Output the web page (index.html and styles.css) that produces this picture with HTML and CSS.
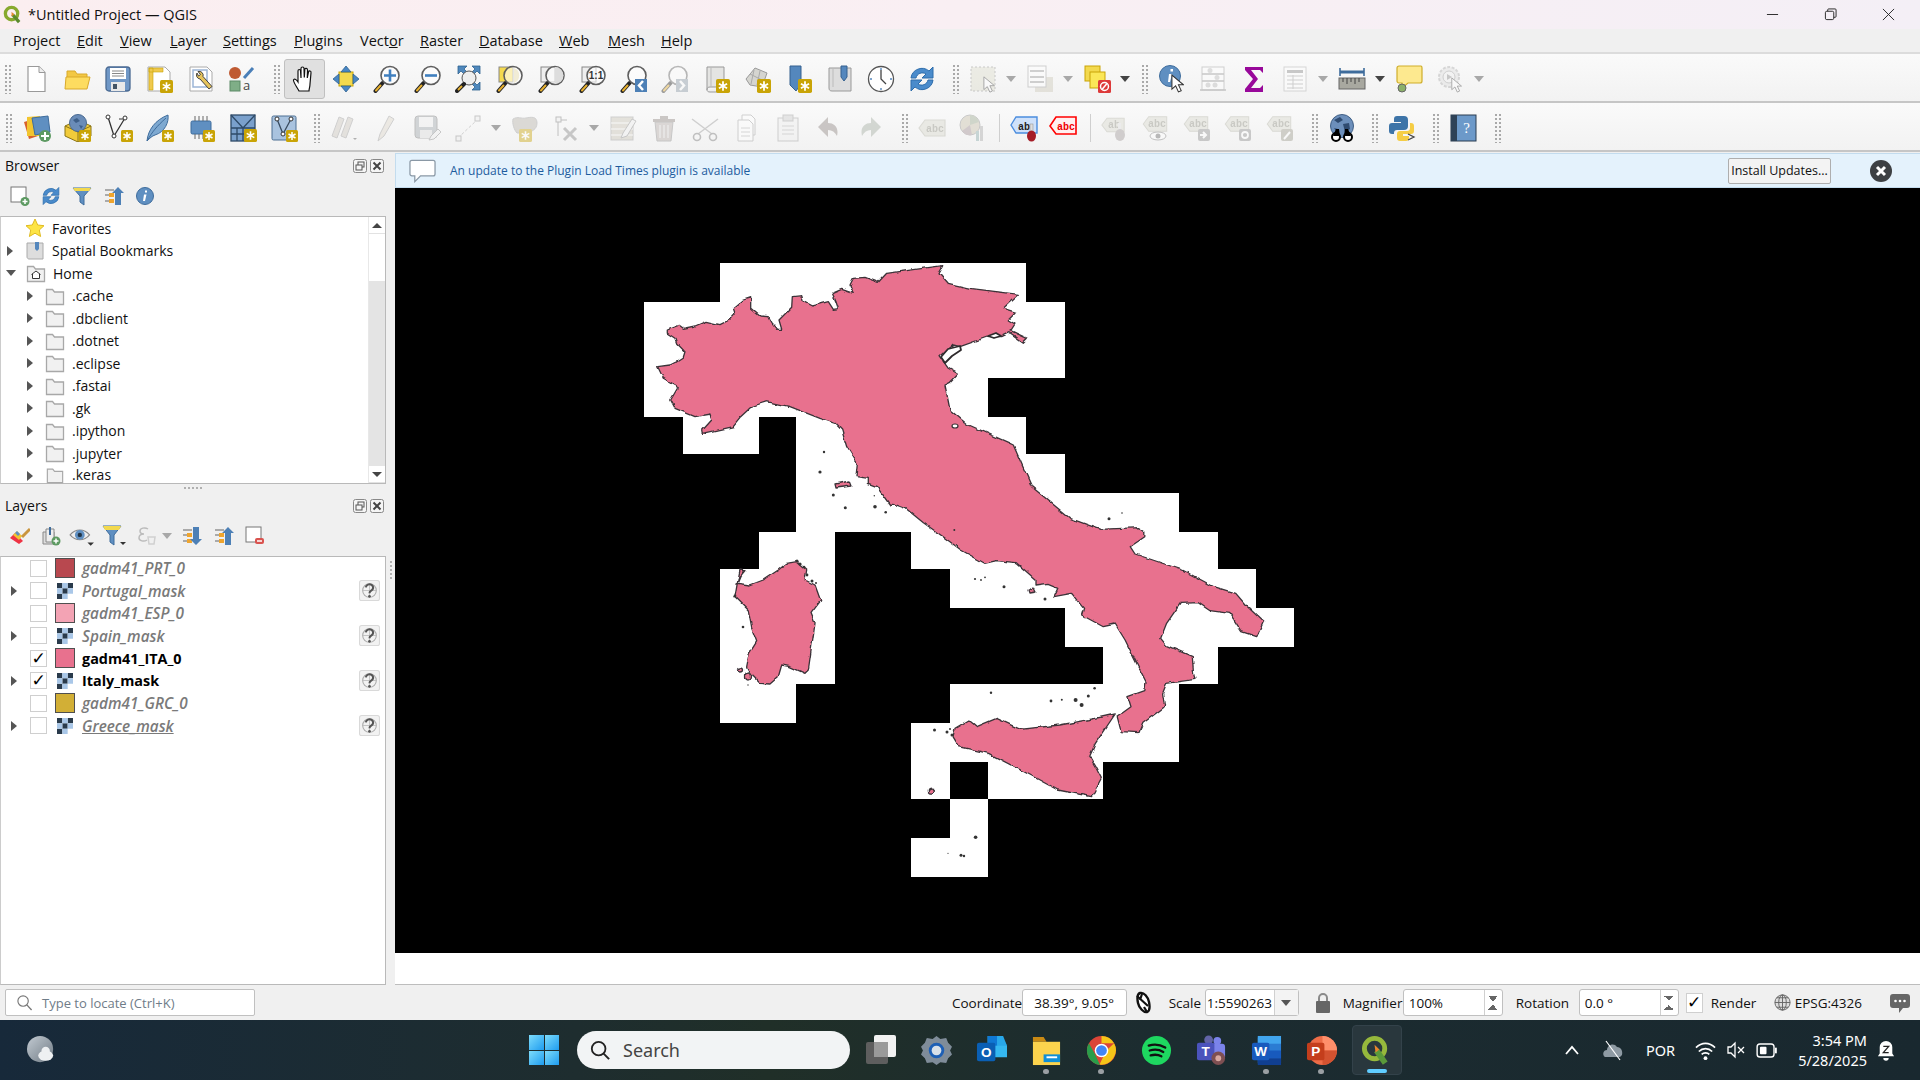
FILE: index.html
```html
<!DOCTYPE html>
<html lang="en">
<head>
  <meta charset="UTF-8">
  <title>*Untitled Project — QGIS</title>
  <link rel="stylesheet" href="styles.css">
</head>
<body>

<!-- shared icon pieces -->
<svg class="sprite" xmlns="http://www.w3.org/2000/svg">
  <symbol id="badge" viewBox="0 0 12 12">
    <rect width="12" height="12" rx="1.5" fill="#c9a406"/>
    <path d="M6 2v8M2.5 4l7 4M9.5 4l-7 4" stroke="#fff" stroke-width="1.5"/>
  </symbol>
  <symbol id="mag" viewBox="0 0 28 28">
    <path d="M2.5 26l7-8" stroke="#222" stroke-width="4" stroke-linecap="round"/>
    <path d="M3 25.5l4.5-5" stroke="#e6b030" stroke-width="2" stroke-linecap="round"/>
    <circle cx="17" cy="10.5" r="9" fill="#fff" fill-opacity=".6" stroke="#5e5e5e" stroke-width="1.6"/>
  </symbol>
  <symbol id="cursor" viewBox="0 0 14 20">
    <path d="M1 1v15l4-3.5 3 6.5 3-1.3-3-6.3h5.4z" fill="#fff" stroke="#333" stroke-width="1.1"/>
  </symbol>
  <symbol id="refresh" viewBox="0 0 28 28">
    <path d="M3 13a11 11 0 0 1 18-7l4-4v11H14l4-4A6.500 6.500 0 0 0 8 13z" fill="#4a8bcb" stroke="#2c6cab"/>
    <path d="M25 15a11 11 0 0 1-18 7l-4 4V15h11l-4 4a6.500 6.500 0 0 0 10-4z" fill="#4a8bcb" stroke="#2c6cab"/>
  </symbol>
  <symbol id="folder" viewBox="0 0 20 20">
    <path d="M1.500 3.500h6l2 2.500h9v12.500h-17z" fill="#f1f1f1" stroke="#a8a8a8" stroke-width="1.300"/>
  </symbol>
  <symbol id="raster" viewBox="0 0 18 18">
    <rect width="18" height="18" fill="#fff"/>
    <path d="M0 0h6v6H0zM12 0h6v6h-6zM6 6h6v6H6zM0 12h6v6H0z" fill="#293a4b"/>
    <path d="M6 0h6v6H6zM0 6h6v6H0zM12 6h6v6h-6zM6 12h6v6H6z" fill="#a9c7e8"/>
  </symbol>
  <symbol id="help-badge" viewBox="0 0 20 20">
    <rect x=".5" y=".5" width="19" height="19" rx="2" fill="#f2f2f2" stroke="#d9d9d9"/>
    <circle cx="10" cy="10" r="6.500" fill="none" stroke="#aaa"/>
    <path d="M3.500 10h13M10 3.500v13" stroke="#bbb" stroke-width=".8"/>
    <path d="M6.500 7a3.500 3.200 0 1 1 5 3.200c-1 .6-1.500 1-1.500 2.300" fill="none" stroke="#555" stroke-width="2"/>
    <circle cx="10" cy="15.500" r="1.300" fill="#555"/>
  </symbol>
  <symbol id="label-tag" viewBox="0 0 28 20">
    <path d="M1 10l6-8h20v16H7z" fill="#d8d8cc" stroke="#b5b5a8" stroke-width="1.200"/>
  </symbol>
  <symbol id="float" viewBox="0 0 14 14">
    <rect x=".5" y=".5" width="13" height="13" rx="2" fill="#f5f5f5" stroke="#888"/>
    <rect x="5" y="3" width="6" height="5" fill="none" stroke="#555"/>
    <rect x="3" y="6" width="6" height="5" fill="#f5f5f5" stroke="#555"/>
  </symbol>
  <symbol id="close" viewBox="0 0 14 14">
    <rect x=".5" y=".5" width="13" height="13" rx="2" fill="#f5f5f5" stroke="#888"/>
    <path d="M3.500 3.500l7 7M10.500 3.500l-7 7" stroke="#444" stroke-width="2"/>
  </symbol>
</svg>

<div class="titlebar">
  <svg class="app-icon" viewBox="0 0 20 20"><circle cx="9" cy="9" r="6.500" fill="none" stroke="#88a92e" stroke-width="3.500"/><path d="M10 10l7 8" stroke="#5b8a2c" stroke-width="3.500"/><path d="M9 7l3 3-3 2z" fill="#e58a2b"/></svg>
  <span class="title-text">*Untitled Project — QGIS</span>
  <div class="win-btns">
    <svg viewBox="0 0 14 14"><path d="M1 7h12" stroke="#222"/></svg>
    <svg viewBox="0 0 14 14"><rect x="1.500" y="3.500" width="9" height="9" rx="1.500" fill="none" stroke="#222"/><path d="M4 3.500V2a1 1 0 0 1 1-1h7a1 1 0 0 1 1 1v7a1 1 0 0 1-1 1h-1.500" fill="none" stroke="#222"/></svg>
    <svg viewBox="0 0 14 14"><path d="M1 1l12 12M13 1L1 13" stroke="#222"/></svg>
  </div>
</div>

<div class="menubar">
  <span class="menu-project">Pro<u>j</u>ect</span>
  <span class="menu-edit"><u>E</u>dit</span>
  <span class="menu-view"><u>V</u>iew</span>
  <span class="menu-layer"><u>L</u>ayer</span>
  <span class="menu-settings"><u>S</u>ettings</span>
  <span class="menu-plugins"><u>P</u>lugins</span>
  <span class="menu-vector">Vect<u>o</u>r</span>
  <span class="menu-raster"><u>R</u>aster</span>
  <span class="menu-database"><u>D</u>atabase</span>
  <span class="menu-web"><u>W</u>eb</span>
  <span class="menu-mesh"><u>M</u>esh</span>
  <span class="menu-help"><u>H</u>elp</span>
</div>

<div class="toolbar">
  <i class="grip first"></i>
  <b class="tool"><svg viewBox="0 0 28 28"><path d="M6 1.500h11l6 6v19H6z" fill="#fff" stroke="#999" stroke-width="1.200"/><path d="M17 1.500v6h6" fill="#eee" stroke="#999"/></svg></b>
  <b class="tool"><svg viewBox="0 0 28 28"><path d="M4 6h8l2 3h10v5H4z" fill="#f3c844" stroke="#d9a92b"/><path d="M3 12h24l-3 12H2z" fill="#fddc60" stroke="#d9a92b"/></svg></b>
  <b class="tool"><svg viewBox="0 0 28 28"><rect x="2" y="2" width="24" height="24" rx="3" fill="#6f97c6" stroke="#4a6a92" stroke-width="1.300"/><rect x="6" y="3" width="16" height="11" fill="#fff"/><path d="M8 6h12M8 8.500h12M8 11h12" stroke="#888"/><rect x="7" y="17" width="14" height="9" fill="#e9e9e9"/><rect x="9" y="19" width="4" height="5" fill="#456"/></svg></b>
  <b class="tool"><svg viewBox="0 0 28 28"><path d="M2 2h17l5 5v19H2z" fill="#fff" stroke="#aaa"/><path d="M3 3h4v22H3zM3 3h14v4H3z" fill="#f0c94e" stroke="#c9a406" stroke-width=".6"/><use href="#badge" x="14" y="15" width="13" height="13"/></svg></b>
  <b class="tool"><svg viewBox="0 0 28 28"><path d="M3 2h17l5 5v19H3z" fill="#fff" stroke="#aaa"/><rect x="6" y="5" width="14" height="17" fill="none" stroke="#9cb5d6" stroke-width="1.500"/><path d="M10 8a4 4 0 0 0 3 6l9 10 3-2.500-9-10a4 4 0 0 0-5-5l2.500 3-2 1.500z" fill="#e6c45c" stroke="#444"/></svg></b>
  <b class="tool"><svg viewBox="0 0 28 28"><circle cx="7" cy="8" r="6" fill="#bf5a32"/><path d="M16 13L25 3" stroke="#4a7fb8" stroke-width="3"/><rect x="2" y="16" width="10" height="10" fill="#7fae87" stroke="#5d8a67"/><text x="15" y="25" class="svg-a">a</text></svg></b>
  <i class="grip lead"></i>
  <b class="tool active"><svg viewBox="0 0 28 28"><path d="M9 26C7 22 3 17 3.500 15c.5-1.500 2.500-1 4.500 2L8 6c0-2 2.500-2 2.500 0l.5 7V3.500c0-2 3-2 3 0l.3 9 .5-8c.2-1.800 2.800-1.500 2.700.5l-.2 8 1.200-6c.5-1.700 2.800-1.200 2.500.8L20 19c0 3-1 5-1 7z" fill="#fff" stroke="#111" stroke-width="1.200"/></svg></b>
  <b class="tool"><svg viewBox="0 0 28 28"><rect x="7" y="7" width="14" height="14" fill="#f4d94e" stroke="#c9a406"/><path d="M14 1l5 6H9zM14 27l-5-6h10zM1 14l6-5v10zM27 14l-6 5V9z" fill="#4a87c4" stroke="#2e628f" stroke-width=".8"/></svg></b>
  <b class="tool"><svg viewBox="0 0 28 28"><use href="#mag" width="28" height="28"/><path d="M11 10.500h12M17 4.500v12" stroke="#3f7fbf" stroke-width="2.600"/></svg></b>
  <b class="tool"><svg viewBox="0 0 28 28"><use href="#mag" width="28" height="28"/><path d="M11 10.500h12" stroke="#3f7fbf" stroke-width="2.600"/></svg></b>
  <b class="tool"><svg viewBox="0 0 28 28"><path d="M3 1h9L9 4l3 3-3 2-3-3-3 3zM25 1v8l-3-3-3 3-2-2 3-3-3-3zM25 25h-8l3-3-3-3 2-2 3 3 3-3z" fill="#4f88bd" stroke="#2e628f" stroke-width=".8"/><circle cx="14" cy="13" r="7" fill="#eee" stroke="#555"/><path d="M2 26l7-7" stroke="#222" stroke-width="4" stroke-linecap="round"/><path d="M3 25l4-4" stroke="#e6b030" stroke-width="2"/></svg></b>
  <b class="tool"><svg viewBox="0 0 28 28"><rect x="3" y="2" width="14" height="15" fill="#f4d94e" stroke="#888"/><use href="#mag" width="28" height="28"/><path d="M18 3a8 8 0 0 1 0 15z" fill="#f1ecd6"/></svg></b>
  <b class="tool"><svg viewBox="0 0 28 28"><rect x="3" y="2" width="14" height="15" fill="#eee" stroke="#888"/><use href="#mag" width="28" height="28"/><path d="M17 2a8.500 8.500 0 0 1 0 17z" fill="#ddd"/></svg></b>
  <b class="tool"><svg viewBox="0 0 28 28"><rect x="3" y="2" width="14" height="15" fill="#eee" stroke="#888"/><use href="#mag" width="28" height="28"/><text x="17" y="14" class="svg-11">1:1</text></svg></b>
  <b class="tool"><svg viewBox="0 0 28 28"><use href="#mag" width="28" height="28"/><rect x="15" y="14" width="12" height="13" fill="#4d80b6"/><path d="M23 16l-4 4.500 4 4.500" fill="none" stroke="#fff" stroke-width="2.500"/></svg></b>
  <b class="tool off"><svg viewBox="0 0 28 28"><use href="#mag" width="28" height="28"/><rect x="15" y="14" width="12" height="13" fill="#8a98a5"/><path d="M19 16l4 4.500-4 4.500" fill="none" stroke="#fff" stroke-width="2.500"/></svg></b>
  <b class="tool"><svg viewBox="0 0 28 28"><path d="M5 2h17v20H8c-2 0-3 1-3 3z" fill="#e4e4e2" stroke="#999"/><path d="M5 25c0 1 1 2 3 2h14v-5" fill="#eee" stroke="#999"/><path d="M9 2v20" stroke="#bbb"/><use href="#badge" x="14" y="14" width="14" height="14"/></svg></b>
  <b class="tool"><svg viewBox="0 0 28 28"><path d="M3 14l9-11 12 5-5 14-12-2z" fill="#d5d5d0" stroke="#999"/><path d="M7 9l12 6M11 5l-3 14M17 6l-3 14" stroke="#aaa"/><use href="#badge" x="14" y="14" width="14" height="14"/></svg></b>
  <b class="tool"><svg viewBox="0 0 28 28"><path d="M5 1h11v18l-5 7-6-6z" fill="#5487bd" stroke="#35618f"/><use href="#badge" x="13" y="14" width="14" height="14"/></svg></b>
  <b class="tool"><svg viewBox="0 0 28 28"><path d="M3 3h22v23H6c-2 0-3-1-3-3z" fill="#ddd" stroke="#999"/><path d="M7 3v19" stroke="#bbb"/><path d="M15 1h6v11l-3 4-3-4z" fill="#5487bd" stroke="#35618f"/></svg></b>
  <b class="tool"><svg viewBox="0 0 28 28"><circle cx="14" cy="14" r="12.500" fill="#fff" stroke="#555" stroke-width="1.300"/><path d="M14 5v9l5 5" fill="none" stroke="#444" stroke-width="1.300"/><path d="M14 3v2M14 23v2M3 14h2M23 14h2" stroke="#5487bd" stroke-width="1.400"/></svg></b>
  <b class="tool"><svg viewBox="0 0 28 28"><use href="#refresh" width="28" height="28"/></svg></b>
  <i class="grip"></i>
  <b class="tool drop off"><svg viewBox="0 0 28 28"><rect x="2" y="2" width="24" height="24" fill="#dcdccb" stroke="#888" stroke-dasharray="2 2"/><use href="#cursor" x="14" y="11" width="12" height="17"/></svg><i class="caret"></i></b>
  <b class="tool drop off"><svg viewBox="0 0 28 28"><rect x="9" y="12" width="18" height="15" fill="#ccc8b8"/><rect x="2" y="1" width="18" height="21" fill="#fff" stroke="#999"/><path d="M4 6h14M4 12h14M4 17h14" stroke="#999" stroke-width="2"/></svg><i class="caret"></i></b>
  <b class="tool drop dark"><svg viewBox="0 0 28 28"><rect x="2" y="1" width="15" height="15" fill="#f3d94e" stroke="#c9a406"/><rect x="7" y="7" width="15" height="16" fill="#fbe758" stroke="#c9a406"/><rect x="15" y="15" width="13" height="13" rx="1.500" fill="#dd3a3a"/><circle cx="21.500" cy="21.500" r="4" fill="none" stroke="#fff" stroke-width="1.500"/><path d="M19 24.500l5-6" stroke="#fff" stroke-width="1.500"/></svg><i class="caret"></i></b>
  <i class="grip tight"></i>
  <b class="tool"><svg viewBox="0 0 28 28"><circle cx="12" cy="11" r="10.500" fill="#5f8fc1" stroke="#3e6c9c"/><path d="M11 9h3l-2 8h-2zM12.500 4h2.500v2.500h-2.500z" fill="#fff"/><use href="#cursor" x="13" y="9" width="13" height="19"/></svg></b>
  <b class="tool off"><svg viewBox="0 0 28 28"><rect x="3" y="2" width="22" height="23" fill="#fff" stroke="#999"/><path d="M3 9h22M3 16h22M1 25h26" stroke="#888" stroke-width="1.500"/><circle cx="11" cy="5.500" r="2.500" fill="#bbb"/><circle cx="18" cy="12.500" r="2.500" fill="#bbb"/><circle cx="9" cy="20" r="2.500" fill="#bbb"/><circle cx="16" cy="20" r="2.500" fill="#bbb"/></svg></b>
  <b class="tool"><svg viewBox="0 0 28 28"><path d="M5 2h18v6l-3-3H11l7 9-7 9h9l3-3v7H5v-3l8-10-8-9z" fill="#98089a"/></svg></b>
  <b class="tool drop off"><svg viewBox="0 0 28 28"><rect x="3" y="2" width="22" height="24" fill="#fff" stroke="#aaa"/><path d="M6 5h16v3H6z" fill="#888"/><path d="M6 11h16M6 15h16M6 19h16M6 23h16M12 10v14" stroke="#999"/></svg><i class="caret"></i></b>
  <b class="tool drop dark"><svg viewBox="0 0 28 28"><rect x="1" y="13" width="26" height="11" fill="#a8a8a0" stroke="#666"/><path d="M5 13v4M9 13v6M13 13v4M17 13v6M21 13v4" stroke="#444"/><path d="M2 7h24" stroke="#3e6c9c" stroke-width="3"/><path d="M2 3v8M26 3v8" stroke="#3e6c9c" stroke-width="1.600"/></svg><i class="caret"></i></b>
  <b class="tool"><svg viewBox="0 0 28 28"><path d="M4 1h22a2 2 0 0 1 1 2v13a2 2 0 0 1-2 2H13l-6 5v-5H4a2 2 0 0 1-2-2V3a2 2 0 0 1 2-2z" fill="#fde98f" stroke="#cfae2b" stroke-width="1.200"/><circle cx="7" cy="23" r="4" fill="#8bb06a" stroke="#666"/></svg></b>
  <b class="tool drop off"><svg viewBox="0 0 28 28"><circle cx="12" cy="12" r="10" fill="#ddd" stroke="#aaa" stroke-width="2" stroke-dasharray="3 1.500"/><circle cx="12" cy="12" r="6" fill="#eee" stroke="#999"/><path d="M10 9l5 3-5 3z" fill="#888"/><use href="#cursor" x="14" y="12" width="11" height="16"/></svg><i class="caret"></i></b>
</div>

<div class="toolbar row-two">
  <i class="grip first"></i>
  <b class="tool"><svg viewBox="0 0 28 28"><path d="M1 8l10-3 4 17-9 3z" fill="#d8622b"/><path d="M4 3l13-1v20H4z" fill="#f2c530"/><path d="M9 4l16-2 2 16-15 3z" fill="#5f8fc1" stroke="#3e6c9c"/><circle cx="22" cy="22" r="6" fill="#5d9a62"/><path d="M22 18v8M18 22h8" stroke="#fff" stroke-width="2"/></svg></b>
  <b class="tool"><svg viewBox="0 0 28 28"><path d="M1 12l13-6 13 6v10l-13 6-13-6z" fill="#f2cb3a" stroke="#8a7415"/><path d="M1 12l13 6 13-6M14 18v10" fill="none" stroke="#8a7415"/><circle cx="14" cy="9" r="8.500" fill="#6a8cb8" stroke="#4a6a92"/><path d="M9 6l4-2 3 3-4 2zM15 11l4 1-2 3z" fill="#3e5f88"/><use href="#badge" x="15" y="16" width="12" height="12"/></svg></b>
  <b class="tool"><svg viewBox="0 0 28 28"><path d="M3 3l6 19 11-18" fill="none" stroke="#333" stroke-width="1.300"/><path d="M14 5h6" stroke="#333"/><circle cx="3" cy="3" r="2" fill="#fff" stroke="#333"/><circle cx="9" cy="22" r="2" fill="#fff" stroke="#333"/><circle cx="20" cy="4" r="2" fill="#fff" stroke="#333"/><use href="#badge" x="16" y="16" width="12" height="12"/></svg></b>
  <b class="tool"><svg viewBox="0 0 28 28"><path d="M1 27C2 16 9 6 22 1c1 7-3 17-13 20-3 1-5 3-8 6z" fill="#7ea9d1" stroke="#3e6c9c"/><path d="M1 27C6 18 11 12 20 4" fill="none" stroke="#3e6c9c"/><use href="#badge" x="16" y="16" width="12" height="12"/></svg></b>
  <b class="tool"><svg viewBox="0 0 28 28"><rect x="4" y="7" width="20" height="13" rx="1.500" fill="#5f8fc1" stroke="#3e6c9c"/><path d="M8 2v5M12 2v5M16 2v5M20 2v5M8 20v5M12 20v5M16 20v5" stroke="#666"/><use href="#badge" x="16" y="16" width="12" height="12"/></svg></b>
  <b class="tool"><svg viewBox="0 0 28 28"><rect x="2" y="1" width="24" height="26" fill="#7aa0cc" stroke="#2e4a68" stroke-width="1.300"/><path d="M2 1l12 13L26 1M2 14h24M14 14v13M8 14v13M2 20h24" fill="none" stroke="#2e4a68" stroke-width="1.300"/><use href="#badge" x="15" y="15" width="13" height="13"/></svg></b>
  <b class="tool"><svg viewBox="0 0 28 28"><rect x="2" y="2" width="24" height="24" rx="1.500" fill="#a9c3df" stroke="#4d6f92"/><path d="M7 5l6 15 8-15" fill="none" stroke="#384b60" stroke-width="1.300"/><circle cx="7" cy="5" r="2" fill="#fff" stroke="#333"/><circle cx="13" cy="20" r="2" fill="#fff" stroke="#333"/><circle cx="21" cy="5" r="2" fill="#fff" stroke="#333"/><use href="#badge" x="16" y="16" width="12" height="12"/></svg></b>
  <i class="grip"></i>
  <b class="tool off"><svg viewBox="0 0 28 28"><path d="M2 22L9 3l5 2-7 19zM11 22l7-19 5 2-7 19z" fill="#ccc6bd" stroke="#999"/><path d="M23 24h4l-2 2z" fill="#555"/></svg></b>
  <b class="tool off"><svg viewBox="0 0 28 28"><path d="M7 27l2-7L18 2l5 3-10 17z" fill="#ddd6c9" stroke="#999"/></svg></b>
  <b class="tool off"><svg viewBox="0 0 28 28"><rect x="2" y="2" width="22" height="22" rx="3" fill="#9fa6ab" stroke="#777"/><rect x="6" y="3" width="14" height="10" fill="#eee"/><rect x="7" y="16" width="12" height="8" fill="#ddd"/><path d="M16 26l2-4 7-7 3 3-7 7z" fill="#eee" stroke="#888"/></svg></b>
  <b class="tool drop off"><svg viewBox="0 0 28 28"><path d="M4 24L24 5" stroke="#999" stroke-dasharray="3 2"/><rect x="2" y="22" width="5" height="5" fill="#eee" stroke="#888"/><rect x="21" y="2" width="5" height="5" fill="#eee" stroke="#888"/></svg><i class="caret"></i></b>
  <b class="tool off"><svg viewBox="0 0 28 28"><path d="M2 5c5-3 8 0 13-1s11-2 11 5-6 8-8 10H6C3 16 1 9 2 5z" fill="#b6b2a8" stroke="#999"/><use href="#badge" x="8" y="15" width="13" height="13"/></svg></b>
  <b class="tool drop off"><svg viewBox="0 0 28 28"><path d="M8 6l7 0M6 8v14" stroke="#777"/><rect x="4" y="3" width="5" height="5" fill="#eee" stroke="#777"/><path d="M12 14l12 12M24 14L12 26" stroke="#888" stroke-width="3"/></svg><i class="caret"></i></b>
  <b class="tool off"><svg viewBox="0 0 28 28"><rect x="2" y="3" width="22" height="23" fill="#c9c4b5" stroke="#999"/><path d="M2 9h22M2 15h22M2 21h22" stroke="#fff"/><path d="M12 24l2-5 9-14 4 2-9 15z" fill="#eee" stroke="#888"/></svg></b>
  <b class="tool off"><svg viewBox="0 0 28 28"><path d="M5 8h18l-2 19H7z" fill="#b5aca8" stroke="#888"/><path d="M3 5h22v3H3zM10 2h8v3h-8z" fill="#8d8480"/><path d="M10 11v13M14 11v13M18 11v13" stroke="#eee"/></svg></b>
  <b class="tool off"><svg viewBox="0 0 28 28"><path d="M1 5l20 15M27 5L7 20" stroke="#999" stroke-width="1.500"/><circle cx="6" cy="23" r="3.500" fill="none" stroke="#777" stroke-width="1.600"/><circle cx="22" cy="23" r="3.500" fill="none" stroke="#777" stroke-width="1.600"/></svg></b>
  <b class="tool off"><svg viewBox="0 0 28 28"><path d="M9 1h9l4 4v16H9z" fill="#fff" stroke="#999"/><path d="M5 6h11l4 4v17H5z" fill="#fff" stroke="#999"/><path d="M8 14h9M8 18h9M8 22h9" stroke="#aaa"/></svg></b>
  <b class="tool off"><svg viewBox="0 0 28 28"><rect x="4" y="4" width="20" height="23" fill="#eee" stroke="#999"/><rect x="9" y="1" width="10" height="6" fill="#ccc" stroke="#999"/><path d="M8 12h12M8 16h12M8 20h12" stroke="#aaa"/></svg></b>
  <b class="tool off"><svg viewBox="0 0 28 28"><path d="M3 13L13 3v6c7 0 11 5 9 13-2-4-5-6-9-6v7z" fill="#8d8480"/></svg></b>
  <b class="tool off"><svg viewBox="0 0 28 28"><path d="M25 13L15 3v6c-7 0-11 5-9 13 2-4 5-6 9-6v7z" fill="#a3aca0"/></svg></b>
  <i class="grip wide"></i>
  <b class="tool off"><svg viewBox="0 0 28 20"><use href="#label-tag" width="28" height="20"/><text x="17" y="14" class="svg-ab gray">abc</text></svg></b>
  <b class="tool off"><svg viewBox="0 0 28 28"><circle cx="11" cy="11" r="10" fill="#c7bfa8" stroke="#888"/><path d="M11 11V1a10 10 0 0 1 9 7z" fill="#9aa88e"/><path d="M11 11l-8 6a10 10 0 0 0 10 4z" fill="#a08f93"/><rect x="17" y="17" width="3" height="10" fill="#8aa"/><rect x="21" y="12" width="3" height="15" fill="#aaa"/></svg></b>
  <i class="vsep"></i>
  <b class="tool"><svg viewBox="0 0 28 28"><path d="M1 11l5-8h21v16H6z" fill="#cfe1fa" stroke="#4b8dde" stroke-width="1.400"/><text x="14" y="16" class="svg-ab dark">ab</text><rect x="20" y="10" width="3" height="8" fill="#ddd" stroke="#999" stroke-width=".6"/><ellipse cx="21.500" cy="22" rx="4.500" ry="5.500" fill="#a51d27"/></svg></b>
  <b class="tool shift-left"><svg viewBox="0 0 28 28"><path d="M1 12l6-9h20v17H7z" fill="#fff0f0" stroke="#f00" stroke-width="1.600"/><text x="17" y="16" class="svg-ab red">abc</text></svg></b>
  <i class="vsep"></i>
  <b class="tool off"><svg viewBox="0 0 28 28"><use href="#label-tag" y="2" width="24" height="18"/><text x="13" y="14" class="svg-ab gray">ab</text><rect x="17" y="9" width="3" height="7" fill="#ddd"/><ellipse cx="19" cy="21" rx="5" ry="6" fill="#9f9898"/></svg></b>
  <b class="tool off"><svg viewBox="0 0 28 28"><use href="#label-tag" y="1" width="26" height="18"/><text x="15" y="13" class="svg-ab gray">abc</text><ellipse cx="16" cy="22" rx="8" ry="4" fill="#fff" stroke="#777"/><circle cx="16" cy="22" r="2.500" fill="#666"/></svg></b>
  <b class="tool off"><svg viewBox="0 0 28 28"><use href="#label-tag" y="1" width="26" height="18"/><text x="15" y="13" class="svg-ab gray">abc</text><rect x="15" y="15" width="12" height="12" rx="2" fill="#8d8d8d"/><path d="M17 21h5M20 18l3 3-3 3" fill="none" stroke="#fff" stroke-width="2"/></svg></b>
  <b class="tool off"><svg viewBox="0 0 28 28"><use href="#label-tag" y="1" width="26" height="18"/><text x="15" y="13" class="svg-ab gray">abc</text><rect x="15" y="15" width="12" height="12" rx="2" fill="#8d8d8d"/><circle cx="21" cy="21" r="3" fill="none" stroke="#fff" stroke-width="1.800"/></svg></b>
  <b class="tool off"><svg viewBox="0 0 28 28"><use href="#label-tag" y="1" width="26" height="18"/><text x="15" y="13" class="svg-ab gray">abc</text><rect x="15" y="15" width="12" height="12" rx="2" fill="#9c9a8c"/><path d="M18 25l6-7" stroke="#fff" stroke-width="2"/></svg></b>
  <i class="grip wide"></i>
  <b class="tool"><svg viewBox="0 0 28 28"><circle cx="14" cy="12" r="11.500" fill="#6c8fbb" stroke="#405f85"/><path d="M6 6l6-3 3 3-5 3zM15 10l6-1 1 6-5 3zM6 14l4 1v5z" fill="#2f4b70"/><circle cx="8" cy="23" r="4" fill="#fff" stroke="#000" stroke-width="2"/><circle cx="20" cy="23" r="4" fill="#fff" stroke="#000" stroke-width="2"/><path d="M5 22l3-7h3l1 7zM23 22l-3-7h-3l-1 7z" fill="#000"/></svg></b>
  <i class="grip"></i>
  <b class="tool"><svg viewBox="0 0 28 28"><path d="M9 2h7a4 4 0 0 1 4 4v6a4 4 0 0 1-4 4H9a3 3 0 0 0-3 3v1H4a3 3 0 0 1-3-3v-5a3 3 0 0 1 3-3h9V8H6V5a3 3 0 0 1 3-3z" fill="#3d74a8"/><path d="M22 9h1a3 3 0 0 1 3 3v5a3 3 0 0 1-3 3h-8v2h6v2a3 3 0 0 1-3 3h-6a3 3 0 0 1-3-3v-4a3 3 0 0 1 3-3h7a3 3 0 0 0 3-3z" fill="#f5cd45"/><path d="M20 20l6 3-6 3" fill="none" stroke="#444" stroke-width="1.300"/></svg></b>
  <i class="grip"></i>
  <b class="tool"><svg viewBox="0 0 28 28"><rect x="2" y="1" width="25" height="26" fill="#6c99c9" stroke="#2b3d50"/><rect x="2" y="1" width="6" height="26" fill="#2e4257"/><text x="17.500" y="19" class="svg-q">?</text></svg></b>
  <i class="grip wide"></i>
</div>

<div class="main">
  <aside class="sidebar">
    <section class="browser">
      <div class="dock-title">Browser
        <svg class="dock-btn" viewBox="0 0 14 14"><use href="#float"/></svg>
        <svg class="dock-btn" viewBox="0 0 14 14"><use href="#close"/></svg>
      </div>
      <div class="dock-tools">
        <b class="dt t19"><svg viewBox="0 0 20 20"><rect x="1" y="1" width="15" height="15" fill="#fff" stroke="#777"/><circle cx="15" cy="15.500" r="4.500" fill="#5d9a62"/><path d="M15 13v5M12.500 15.500h5" stroke="#fff" stroke-width="1.500"/></svg></b>
        <b class="dt"><svg viewBox="0 0 28 28"><use href="#refresh" width="28" height="28"/></svg></b>
        <b class="dt"><svg viewBox="0 0 20 20"><path d="M1 2h18l-7 8v9l-4-3v-6z" fill="#5f8fc1" stroke="#3e6c9c"/><path d="M1 2h18l-2 3H3z" fill="#f3d94e"/></svg></b>
        <b class="dt"><svg viewBox="0 0 20 20"><path d="M1 4h9M1 9h9M1 15h9" stroke="#aaa" stroke-width="2"/><rect x="5" y="7" width="5" height="4" fill="#efa52e"/><rect x="5" y="13" width="5" height="4" fill="#efa52e"/><path d="M14 1l6 6h-3v12h-6V7H8z" fill="#4d80b6"/></svg></b>
        <b class="dt"><svg viewBox="0 0 20 20"><circle cx="10" cy="10" r="8.500" fill="#5f8fc1" stroke="#3e6c9c"/><path d="M9 8.500h2.500L10 15H8zM10 4.500h2v2h-2z" fill="#fff"/></svg></b>
      </div>
      <div class="tree-box">
        <div class="tree">
          <div class="row"><i class="arrow none"></i><svg class="ico star" viewBox="0 0 20 20"><path d="M10 1l2.700 6 6.300.700-4.700 4.300 1.300 6.500-5.600-3.300-5.600 3.300 1.300-6.500L1 7.700 7.300 7z" fill="#fde445" stroke="#e0bb22"/></svg>Favorites</div>
          <div class="row"><i class="arrow"></i><svg class="ico" viewBox="0 0 20 20"><path d="M2 2h16v16H4c-1 0-2-1-2-2z" fill="#ddd" stroke="#aaa"/><path d="M10 1h4v7l-2 2-2-2z" fill="#5487bd"/></svg>Spatial Bookmarks</div>
          <div class="row"><i class="arrow open"></i><svg class="ico" viewBox="0 0 20 20"><use href="#folder" width="20" height="20"/><path d="M5.500 11.500L10 8l4.500 3.500M6.500 11v4.500h7V11" fill="#fff" stroke="#333"/></svg>Home</div>
          <div class="row sub"><i class="arrow"></i><svg class="ico" viewBox="0 0 20 20"><use href="#folder" width="20" height="20"/></svg>.cache</div>
          <div class="row sub"><i class="arrow"></i><svg class="ico" viewBox="0 0 20 20"><use href="#folder" width="20" height="20"/></svg>.dbclient</div>
          <div class="row sub"><i class="arrow"></i><svg class="ico" viewBox="0 0 20 20"><use href="#folder" width="20" height="20"/></svg>.dotnet</div>
          <div class="row sub"><i class="arrow"></i><svg class="ico" viewBox="0 0 20 20"><use href="#folder" width="20" height="20"/></svg>.eclipse</div>
          <div class="row sub"><i class="arrow"></i><svg class="ico" viewBox="0 0 20 20"><use href="#folder" width="20" height="20"/></svg>.fastai</div>
          <div class="row sub"><i class="arrow"></i><svg class="ico" viewBox="0 0 20 20"><use href="#folder" width="20" height="20"/></svg>.gk</div>
          <div class="row sub"><i class="arrow"></i><svg class="ico" viewBox="0 0 20 20"><use href="#folder" width="20" height="20"/></svg>.ipython</div>
          <div class="row sub"><i class="arrow"></i><svg class="ico" viewBox="0 0 20 20"><use href="#folder" width="20" height="20"/></svg>.jupyter</div>
          <div class="row sub last-row"><i class="arrow"></i><svg class="ico" viewBox="0 0 20 20"><use href="#folder" width="20" height="20"/></svg>.keras</div>
        </div>
        <div class="scrollbar">
          <span class="sb-btn"><i class="sb-up"></i></span>
          <span class="sb-gap"></span>
          <span class="sb-thumb"></span>
          <span class="sb-btn"><i class="sb-down"></i></span>
        </div>
      </div>
    </section>

    <div class="split-h"></div>

    <section class="layers">
      <div class="dock-title">Layers
        <svg class="dock-btn" viewBox="0 0 14 14"><use href="#float"/></svg>
        <svg class="dock-btn" viewBox="0 0 14 14"><use href="#close"/></svg>
      </div>
      <div class="dock-tools">
        <b class="dt"><svg viewBox="0 0 20 20"><path d="M0 12l5-5 8 8-4 3z" fill="#e34"/><path d="M3 9l4-4 5 5-3 4z" fill="#f3c530"/><path d="M5 7l2-2 3 3-2 2z" fill="#5f8fc1"/><path d="M12 11l8-8" stroke="#c9953e" stroke-width="3"/></svg></b>
        <b class="dt"><svg viewBox="0 0 20 20"><path d="M2 6h11v12H2z" fill="#ddd" stroke="#888"/><path d="M5 3h8v13H5z" fill="#eee" stroke="#888"/><path d="M9 1v8" stroke="#3e6c9c" stroke-width="2"/><circle cx="15" cy="15" r="4.500" fill="#5d9a62"/><path d="M15 12.500v5M12.500 15h5" stroke="#fff" stroke-width="1.500"/></svg></b>
        <b class="dt"><svg class="big" viewBox="0 0 24 20"><path d="M1 9c5-6 13-6 18 0-5 6-13 6-18 0z" fill="#eee" stroke="#888"/><circle cx="10" cy="9" r="4.500" fill="#5f8fc1"/><circle cx="10" cy="9" r="2" fill="#234"/><path d="M17 16h6l-3 3z" fill="#333"/></svg></b>
        <b class="dt"><svg class="big" viewBox="0 0 24 22"><path d="M1 1h18l-7 9v10l-4-3v-7z" fill="#5f8fc1" stroke="#3e6c9c"/><path d="M1 1h18l-2 4H3z" fill="#f3d94e"/><path d="M18 17h6l-3 3z" fill="#333"/></svg></b>
        <b class="dt wide-dt off"><svg viewBox="0 0 20 20"><path d="M11 3C8 1 3 2 3 5s2 3 4 3c-3 0-5 1-5 4s5 4 8 2" fill="none" stroke="#999" stroke-width="1.500"/><path d="M11 11h7l-1 7h-5z" fill="none" stroke="#bbb" stroke-width="1.500"/></svg><i class="caret"></i></b>
        <b class="dt"><svg viewBox="0 0 20 20"><path d="M1 4h9M1 9h9M1 15h9" stroke="#aaa" stroke-width="2"/><rect x="5" y="7" width="5" height="4" fill="#efa52e"/><rect x="5" y="13" width="5" height="4" fill="#efa52e"/><path d="M14 19l6-6h-3V1h-6v12H8z" fill="#4d80b6"/></svg></b>
        <b class="dt"><svg viewBox="0 0 20 20"><path d="M1 4h9M1 9h9M1 15h9" stroke="#aaa" stroke-width="2"/><rect x="5" y="7" width="5" height="4" fill="#efa52e"/><rect x="5" y="13" width="5" height="4" fill="#efa52e"/><path d="M14 1l6 6h-3v12h-6V7H8z" fill="#4d80b6"/></svg></b>
        <b class="dt"><svg viewBox="0 0 20 20"><rect x="1" y="1" width="15" height="15" fill="#fff" stroke="#777"/><rect x="10" y="12" width="9" height="6" rx="2" fill="#d9534f"/><path d="M12 15h5" stroke="#fff" stroke-width="1.500"/></svg></b>
      </div>
      <div class="layer-box">
        <div class="layer-row"><i class="arrow none"></i><i class="check"></i><i class="swatch prt"></i><span class="lname">gadm41_PRT_0</span></div>
        <div class="layer-row"><i class="arrow"></i><i class="check"></i><svg class="raster" viewBox="0 0 18 18"><use href="#raster"/></svg><span class="lname">Portugal_mask</span><svg class="help" viewBox="0 0 20 20"><use href="#help-badge"/></svg></div>
        <div class="layer-row"><i class="arrow none"></i><i class="check"></i><i class="swatch esp"></i><span class="lname">gadm41_ESP_0</span></div>
        <div class="layer-row"><i class="arrow"></i><i class="check"></i><svg class="raster" viewBox="0 0 18 18"><use href="#raster"/></svg><span class="lname">Spain_mask</span><svg class="help" viewBox="0 0 20 20"><use href="#help-badge"/></svg></div>
        <div class="layer-row on"><i class="arrow none"></i><i class="check">✓</i><i class="swatch ita"></i><span class="lname">gadm41_ITA_0</span></div>
        <div class="layer-row on"><i class="arrow"></i><i class="check">✓</i><svg class="raster" viewBox="0 0 18 18"><use href="#raster"/></svg><span class="lname">Italy_mask</span><svg class="help" viewBox="0 0 20 20"><use href="#help-badge"/></svg></div>
        <div class="layer-row"><i class="arrow none"></i><i class="check"></i><i class="swatch grc"></i><span class="lname">gadm41_GRC_0</span></div>
        <div class="layer-row"><i class="arrow"></i><i class="check"></i><svg class="raster" viewBox="0 0 18 18"><use href="#raster"/></svg><span class="lname under">Greece_mask</span><svg class="help" viewBox="0 0 20 20"><use href="#help-badge"/></svg></div>
      </div>
    </section>
  </aside>

  <div class="split-v"></div>

  <div class="work">
    <div class="msgbar">
      <svg class="msg-icon" viewBox="0 0 28 24"><path d="M3 1h22a2 2 0 0 1 2 2v12a2 2 0 0 1-2 2H12l-6 6v-6H3a2 2 0 0 1-2-2V3a2 2 0 0 1 2-2z" fill="#fff" stroke="#8a98a5" stroke-width="1.300"/></svg>
      <span class="msg-text">An update to the Plugin Load Times plugin is available</span>
      <button class="msg-btn">Install Updates...</button>
      <svg class="msg-close" viewBox="0 0 22 22"><circle cx="11" cy="11" r="11" fill="#3d4043"/><path d="M7 7l8 8M15 7l-8 8" stroke="#fff" stroke-width="3"/></svg>
    </div>
    <div class="canvas">
      <svg class="map" viewBox="395 188 1525 765" xmlns="http://www.w3.org/2000/svg">
        <defs>
          <filter id="rough" x="-2%" y="-2%" width="104%" height="104%">
            <feTurbulence type="fractalNoise" baseFrequency=".11" numOctaves="2" seed="4" result="noise"/>
            <feDisplacementMap in="SourceGraphic" in2="noise" scale="4" xChannelSelector="R" yChannelSelector="G"/>
          </filter>
        </defs>
        <g class="mask" shape-rendering="crispEdges">
          <rect x="720" y="263" width="306" height="39"/>
          <rect x="644" y="302" width="421" height="76"/>
          <rect x="644" y="378" width="344" height="39"/>
          <rect x="683" y="417" width="76" height="37"/>
          <rect x="796" y="417" width="230" height="37"/>
          <rect x="796" y="454" width="269" height="39"/>
          <rect x="796" y="493" width="383" height="39"/>
          <rect x="759" y="532" width="76" height="37"/>
          <rect x="911" y="532" width="307" height="37"/>
          <rect x="720" y="569" width="115" height="115"/>
          <rect x="950" y="569" width="306" height="39"/>
          <rect x="1065" y="608" width="229" height="39"/>
          <rect x="1103" y="647" width="115" height="37"/>
          <rect x="720" y="684" width="76" height="39"/>
          <rect x="950" y="684" width="229" height="39"/>
          <rect x="911" y="723" width="268" height="39"/>
          <rect x="911" y="762" width="39" height="37"/>
          <rect x="988" y="762" width="115" height="37"/>
          <rect x="950" y="799" width="38" height="39"/>
          <rect x="911" y="838" width="77" height="39"/>
        </g>
        <g class="land" filter="url(#rough)">
          <!-- mainland -->
          <path d="M657.7 366.7L670 365 676 362 683.3 357.3 685 351.700 676.7 343.300 675 338.300 667.300 333.300 667.300 330 679.300 325.300 683.300 328.300 695 326 706 321.300 720 324.700 729.300 320 735 313.300 733.300 308.300 743.300 300 750.700 297.700 750.700 308.300 760 316 768.300 316.700 771.700 323.300 776.700 329.300 781.700 329.300 779 320 791.700 307.300 792.300 296.700 801.700 295.700 803.300 301.700 811.700 306 828.300 301.700 833.300 309.300 838.300 308.700 836 301.700 832.300 293.300 841.700 289.300 853.300 293.300 850 285 853.300 278.300 865 277.300 878.300 282.300 886.700 273.300 906.700 270.700 942.700 265.700 939 272.700 948.300 283.300 970 288.300 1018.300 294.300 1003.300 308.300 1016 312.300 1008.300 320 1015 324 1010.700 330.700 1027.300 338.300 1023.300 342.300 1010 332.700 1001.700 336.700 990 336 960 346.700 953.300 345 940 356.700 948.300 368.300 958.300 374 950 382.700 945 385 950 410 966.700 424 1008.300 442.700 1013.300 445 1031.700 486.700 1070 518.300 1100 529.300 1138.900 527.700 1144.800 531.700 1144.800 536.700 1130.200 546.700 1135 554 1182.400 570 1214 586.700 1235.800 593.300 1245.700 605 1263.500 621.700 1256.700 636.700 1241.700 631.700 1229.800 613.300 1210 610.700 1198.200 602.700 1180.400 603.300 1166.600 623.300 1160.700 638.300 1166.600 645.700 1192.300 656.700 1193.500 673.300 1195 679.300 1166.600 683.300 1162.600 693.300 1164.600 706.700 1142.900 723.300 1138.900 732.700 1121.100 731.700 1117.200 716.700 1131 706.700 1127.900 696.700 1144.800 690.700 1146 681.700 1135 660 1125.100 640 1115.200 624 1103.300 626.700 1081.600 615 1083.600 608.300 1071.700 593.300 1053.900 596.700 1057.800 588.300 1048 584.300 1036 586 1036 580 1016.300 562.700 996.600 560.700 984.700 563.300 961 550 943.200 536.700 923.400 522.700 905.600 508.300 891.800 503.300 890 505 876.700 486.700 868.300 483.300 868.300 478.300 856 476.700 857.300 463.300 846.700 446.700 841.700 430 835 423.300 820 418.300 790 406.700 766.700 401.700 753.300 406 740 418.300 733.300 426.700 703.300 433.300 702.700 430 711.700 420 710 414 695 416.700 675 408.300 670.700 400 678.300 386.700 663.300 378.300Z"/>
          <!-- sardinia -->
          <path d="M740 570L745 570.700 740 576.700 737.300 583.300 750 585 763.300 580 778.300 570 786.700 563.300 796.700 561.700 806.700 570 805 580 815 585 820.700 600.700 811 613.300 815 623.300 808.300 670 805 673.300 790 666.700 781.700 665 778.300 676.700 770 684 760 683.300 750 673.300 746.700 666.700 749.300 653.300 756.700 641.700 751.700 628.300 748.300 610 735 596.700 737.300 583.300Z"/>
          <!-- sicily -->
          <path d="M955 728.300L968.900 720 976.800 726.700 996.600 718.300 1020.300 729.300 1059.800 725 1095.400 718.300 1115.200 714 1095.400 743.300 1089.500 756.700 1095.400 766.700 1101.300 778.300 1091.500 796.700 1057.800 790 1028.200 774 988.600 753.300 959 746.700 953 736.700Z"/>
          <path d="M835 484l15-3 2 5-16 2z"/>
          <path d="M1028 590l5-2 2 4-6 1z"/>
          <ellipse cx="931.300" cy="790.700" rx="3" ry="2.500"/>
          <ellipse cx="741" cy="670" rx="2.500" ry="2"/>
          <ellipse cx="748" cy="676" rx="2.500" ry="4"/>
        </g>
        <!-- venice lagoon and the coast details that stay dark and white -->
        <g class="lagoon">
          <path d="M960 346l-12 3-7 8 4 6 7-7 9-6z"/>
          <path d="M988 336l8-3 5 3-7 2z"/>
        </g>
        <ellipse class="lake" cx="955" cy="426" rx="3" ry="2"/>
        <g class="islets">
          <circle cx="824" cy="452" r="1.200"/><circle cx="820" cy="472" r="1.600"/><circle cx="833.300" cy="495" r="1.500"/><circle cx="845.300" cy="507.700" r="1.500"/><circle cx="875" cy="506.700" r="1.800"/><circle cx="885.700" cy="512.300" r="1.300"/><circle cx="874.300" cy="495.700" r=".7"/><circle cx="954.300" cy="530" r="1"/><circle cx="975" cy="579" r="1.100"/><circle cx="981" cy="580" r=".9"/><circle cx="985" cy="577.300" r=".9"/><circle cx="1004" cy="586.700" r="1.500"/><circle cx="1045" cy="599" r="1.500"/><circle cx="1109" cy="518.700" r="1.500"/><circle cx="1122" cy="513" r=".8"/><circle cx="991" cy="692.700" r="1.200"/><circle cx="1051" cy="701" r="1.400"/><circle cx="1061.800" cy="699.700" r="1"/><circle cx="1075.600" cy="700" r="2"/><circle cx="1081.600" cy="705" r="2"/><circle cx="1088.300" cy="696" r="1.500"/><circle cx="1094.600" cy="688.300" r="1.300"/><circle cx="934.500" cy="730" r="1.500"/><circle cx="947" cy="732" r="1.500"/><circle cx="950" cy="729" r="1"/><circle cx="952" cy="735" r="1.500"/><circle cx="975.600" cy="837.300" r="1.800"/><circle cx="961" cy="855.300" r="1.500"/><circle cx="964" cy="856" r="1.200"/><circle cx="948" cy="853.300" r=".6"/><circle cx="743" cy="627" r="1.300"/><circle cx="748" cy="685" r=".7"/>
          <circle cx="797" cy="561" r="1.500"/><circle cx="800" cy="564" r="1.600"/><circle cx="804" cy="567" r="1.300"/><circle cx="807" cy="575" r="1.400"/><circle cx="812" cy="581" r="1.500"/><circle cx="816" cy="583" r="1"/><circle cx="735" cy="596" r="1.400"/>
        </g>
      </svg>
    </div>
    <div class="under-canvas"></div>
  </div>
</div>

<div class="statusbar">
  <div class="locator">
    <svg viewBox="0 0 18 18"><circle cx="7.500" cy="7.500" r="5.500" fill="none" stroke="#777" stroke-width="1.200"/><path d="M11.500 11.500l5 5.500" stroke="#777" stroke-width="1.400"/></svg>
    <span>Type to locate (Ctrl+K)</span>
  </div>
  <span class="st-label st-coord">Coordinate</span>
  <span class="field coord-val">38.39°, 9.05°</span>
  <svg class="st-mouse" viewBox="0 0 20 24"><path d="M6 2c4-1 8 4 9 9s1 9-2 10-8-4-9-9S3 3 6 2z" fill="#fff" stroke="#111" stroke-width="2.400"/><path d="M3 5l11 10M8 3l-2 6M10 16l3 5" stroke="#111" stroke-width="2.200"/></svg>
  <span class="st-label st-scale">Scale</span>
  <span class="field combo">1:5590263<i class="combo-arrow"><i class="caret"></i></i></span>
  <svg class="st-lock" viewBox="0 0 16 22"><path d="M4 10V6a4 4 0 0 1 8 0v4" fill="none" stroke="#8a8a8a" stroke-width="2"/><rect x="1" y="9" width="14" height="12" rx="1" fill="#666"/></svg>
  <span class="st-label st-magn">Magnifier</span>
  <span class="field spin magn-val">100%<i class="spin-arrows"></i></span>
  <span class="st-label st-rot">Rotation</span>
  <span class="field spin rot-val">0.0 °<i class="spin-arrows"></i></span>
  <i class="check st-check">✓</i>
  <span class="st-label st-render">Render</span>
  <svg class="st-globe" viewBox="0 0 20 20"><circle cx="10" cy="10" r="8" fill="#ddd" stroke="#666"/><path d="M2 10h16M10 2v16M4 5h12M4 15h12" stroke="#666"/><ellipse cx="10" cy="10" rx="4" ry="8" fill="none" stroke="#666"/></svg>
  <span class="st-label st-crs">EPSG:4326</span>
  <svg class="st-msg" viewBox="0 0 20 20"><path d="M3 1h14a3 3 0 0 1 3 3v8a3 3 0 0 1-3 3h-4l-4 5v-5H3a3 3 0 0 1-3-3V4a3 3 0 0 1 3-3z" fill="#666"/><circle cx="5.500" cy="8" r="1.300" fill="#fff"/><circle cx="10" cy="8" r="1.300" fill="#fff"/><circle cx="14.500" cy="8" r="1.300" fill="#fff"/></svg>
</div>

<div class="taskbar">
  <svg class="tb-weather" viewBox="0 0 30 30"><defs><linearGradient id="moon" x1="0" y1="0" x2="1" y2="1"><stop offset="0" stop-color="#c3cbd2"/><stop offset="1" stop-color="#6f7a84"/></linearGradient></defs><circle cx="14" cy="14" r="14" fill="url(#moon)"/><ellipse cx="20" cy="21" rx="8" ry="5.500" fill="#eef0f2"/><circle cx="20" cy="16" r="4.500" fill="#eef0f2"/></svg>
  <div class="start"><i></i><i></i><i></i><i></i></div>
  <div class="search">
    <svg viewBox="0 0 22 22"><circle cx="9.500" cy="9.500" r="7.500" fill="none" stroke="#222" stroke-width="2"/><path d="M15 15l6 6" stroke="#222" stroke-width="2.200"/></svg>
    <span>Search</span>
  </div>
  <svg class="tb-view" viewBox="0 0 32 32"><rect x="1" y="8" width="22" height="22" rx="2" fill="#5e5e5e"/><rect x="9" y="1" width="22" height="22" rx="2" fill="#f2f2f2"/><rect x="9" y="8" width="14" height="15" fill="#9a9a9a"/></svg>
  <div class="apps">
    <span class="app"><svg viewBox="0 0 32 32"><path d="M16 1l4 3 6-1 2 5 4 4-2 4 2 4-4 4-2 5-6-1-4 3-4-3-6 1-2-5-4-4 2-4-2-4 4-4 2-5 6 1z" fill="#7f8c99"/><circle cx="16" cy="16" r="8" fill="#1d5fb5"/><circle cx="16" cy="16" r="5" fill="#d8e0e8"/></svg></span>
    <span class="app"><svg viewBox="0 0 32 32"><path d="M12 1h14l6 10v12H12z" fill="#35b8f1"/><path d="M12 1h10v10H12z" fill="#0f78d4"/><path d="M22 1h6l4 10H22z" fill="#28a8ea"/><rect x="1" y="8" width="19" height="19" rx="2" fill="#0a5fb4"/><text x="10.500" y="23" class="svg-app">O</text></svg></span>
    <span class="app run"><svg viewBox="0 0 32 32"><path d="M2 2h11l3 5h-14z" fill="#c98a14"/><rect x="2" y="7" width="28" height="24" fill="#fcd34d"/><rect x="13" y="20" width="17" height="8" fill="#0f8fd6"/><rect x="16" y="22" width="11" height="2" fill="#fff"/></svg></span>
    <span class="app run"><svg viewBox="0 0 32 32"><circle cx="16" cy="16" r="15" fill="#db4437"/><path d="M16 1a15 15 0 0 1 13 7.500H16z" fill="#f5c518"/><path d="M29 8.500a15 15 0 0 1-15 22l6.500-14z" fill="#f5c518"/><path d="M3 8.500L9.500 20l5 11A15 15 0 0 1 3 8.500z" fill="#2a9d4a"/><circle cx="16" cy="16" r="7" fill="#fff"/><circle cx="16" cy="16" r="5.500" fill="#4285f4"/></svg></span>
    <span class="app"><svg viewBox="0 0 32 32"><circle cx="16" cy="16" r="15" fill="#1ed760"/><path d="M8 11c6-2 12-1 17 2M9 16c5-1.500 10-1 14 1.500M10 21c4-1 8-.7 11 1" fill="none" stroke="#111" stroke-width="2.400" stroke-linecap="round"/></svg></span>
    <span class="app"><svg viewBox="0 0 32 32"><circle cx="22" cy="6" r="4" fill="#7b83eb"/><circle cx="13" cy="5" r="4.500" fill="#6264a7"/><rect x="8" y="9" width="22" height="16" rx="3" fill="#7b83eb"/><rect x="1" y="8" width="18" height="18" rx="2" fill="#4b53bc"/><text x="10" y="22" class="svg-app">T</text><circle cx="23" cy="24" r="7" fill="#7e4f52"/><circle cx="23" cy="24" r="3" fill="#d9a8a0"/></svg></span>
    <span class="app run"><svg viewBox="0 0 32 32"><rect x="7" y="1" width="24" height="30" rx="2" fill="#2b7cd3"/><rect x="7" y="1" width="24" height="8" fill="#41a5ee"/><rect x="7" y="16" width="24" height="8" fill="#185abd"/><rect x="7" y="24" width="24" height="7" fill="#103f91"/><rect x="1" y="8" width="18" height="18" rx="2" fill="#185abd"/><text x="10" y="22" class="svg-app">W</text></svg></span>
    <span class="app run"><svg viewBox="0 0 32 32"><circle cx="17" cy="16" r="15" fill="#ed6c47"/><path d="M17 1a15 15 0 0 1 15 15H17z" fill="#ff8f6b"/><path d="M17 16h15a15 15 0 0 1-15 15z" fill="#d35230"/><rect x="1" y="8" width="18" height="18" rx="2" fill="#c43e1c"/><text x="10" y="22" class="svg-app">P</text></svg></span>
    <span class="app active"><svg viewBox="0 0 32 32"><circle cx="14" cy="14" r="10.500" fill="none" stroke="#96b83c" stroke-width="5"/><path d="M16 16l9 13" stroke="#5b9a3a" stroke-width="6"/><path d="M14 10l5 5-4 3z" fill="#e8862c"/></svg></span>
  </div>
  <div class="tray">
    <svg class="tr-up" viewBox="0 0 14 10"><path d="M1 9l6-7 6 7" fill="none" stroke="#fff" stroke-width="1.800"/></svg>
    <svg class="tr-cloud" viewBox="0 0 22 22"><path d="M3 18c-3-2-2-7 2-7 0-5 7-8 10-3 4 0 6 4 5 8l-2 2z" fill="#8e9aa3"/><path d="M4 2l14 19" stroke="#fff" stroke-width="1.200"/></svg>
    <span class="tr-lang">POR</span>
    <svg class="tr-wifi" viewBox="0 0 22 22"><path d="M1 8c6-6 14-6 20 0M4 12c4-4 10-4 14 0M7 15c2-2 6-2 8 0" fill="none" stroke="#fff" stroke-width="1.700"/><circle cx="11" cy="19" r="2" fill="#fff"/></svg>
    <svg class="tr-vol" viewBox="0 0 20 20"><path d="M2 7h3l4-4v14l-4-4H2z" fill="none" stroke="#fff" stroke-width="1.300"/><path d="M12 7l6 6M18 7l-6 6" stroke="#fff" stroke-width="1.300"/></svg>
    <svg class="tr-batt" viewBox="0 0 22 16"><rect x="1" y="1" width="18" height="14" rx="3" fill="none" stroke="#fff" stroke-width="1.500"/><rect x="4" y="4" width="7" height="8" rx="1" fill="#fff"/><rect x="20" y="5" width="2" height="6" fill="#fff"/></svg>
    <div class="clock"><span>3:54 PM</span><span>5/28/2025</span></div>
    <svg class="tr-bell" viewBox="0 0 20 24"><path d="M10 2a7 7 0 0 1 7 7v7l2 3H1l2-3V9a7 7 0 0 1 7-7z" fill="#fff"/><path d="M7 21a3 3 0 0 0 6 0z" fill="#fff"/><path d="M7 8h6l-6 7h6" fill="none" stroke="#222" stroke-width="1.400"/></svg>
  </div>
</div>

</body>
</html>
```

FILE: styles.css
```css
* {
  box-sizing: border-box;
}
html, body {
  margin: 0;
  height: 1080px;
  overflow: hidden;
}
body {
  display: flex;
  flex-direction: column;
  background-color: #f0f0f0;
  color: #111;
  font-family: "Open Sans", "Noto Sans", sans-serif;
  font-size: 14px;
}
.sprite {
  position: absolute;
  width: 0;
  height: 0;
}
i, b {
  font-style: normal;
  font-weight: normal;
}

/* title + menu */
.titlebar {
  height: 29px;
  display: flex;
  align-items: center;
  padding-left: 3px;
  background: linear-gradient(90deg, #fbeef0, #f9eff3 50%, #f4eff6);
}
.app-icon {
  width: 19px;
  height: 19px;
}
.title-text {
  margin-left: 6px;
  font-size: 14.5px;
}
.win-btns {
  margin-left: auto;
  display: flex;
  gap: 45px;
  padding-right: 25px;
}
.win-btns svg {
  width: 13px;
  height: 13px;
}
.menubar {
  height: 25px;
  display: flex;
  align-items: center;
  padding-left: 13px;
  background-color: #f0f0f0;
  border-bottom: 2px solid #dcdcdc;
  font-size: 14.5px;
}
.menubar span {
  flex: none;
}
.menu-project { width: 64px; }
.menu-edit { width: 43px; }
.menu-view { width: 50px; }
.menu-layer { width: 53px; }
.menu-settings { width: 71px; }
.menu-plugins { width: 66px; }
.menu-vector { width: 60px; }
.menu-raster { width: 59px; }
.menu-database { width: 80px; }
.menu-web { width: 49px; }
.menu-mesh { width: 53px; }

/* toolbars */
.toolbar {
  height: 49px;
  display: flex;
  align-items: center;
  padding-left: 4px;
  padding-top: 2px;
  background: linear-gradient(#fafafa, #f2f2f2);
  border-bottom: 2px solid #c6c6c6;
}
.toolbar.row-two {
  padding-left: 4.6px;
}
.tool {
  flex: none;
  width: 41.2px;
  height: 40px;
  display: flex;
  align-items: center;
  justify-content: center;
}
.tool svg {
  flex: none;
  width: 28px;
  height: 28px;
}
.tool.active {
  background-color: #e0e0e0;
  border: 1px solid #c0c0c0;
  border-radius: 3px;
}
.tool.off svg {
  opacity: .42;
}
.tool.shift-left svg {
  margin-right: 4px;
}
.drop {
  width: 57px;
  justify-content: flex-start;
  padding-left: 6.6px;
}
.caret {
  flex: none;
  margin-left: 14.6px;
  width: 0;
  height: 0;
  border-left: 5px solid transparent;
  border-right: 5px solid transparent;
  border-top: 6px solid #a8a8a8;
  margin-right: 0;
}
.drop.dark .caret {
  border-top-color: #444;
}
.drop .caret {
  margin-left: 9px;
}
.grip {
  flex: none;
  width: 8px;
  height: 30px;
  margin: 0 2.4px 0 9px;
  background-image: radial-gradient(circle, #a9a9a9 .8px, transparent 1px);
  background-size: 4px 4px;
}
.grip.first {
  margin: 0 3.4px 0 0;
}
.grip.lead {
  margin-left: 10.9px;
}
.grip.wide {
  margin-left: 10.4px;
}
.grip.tight {
  margin-left: 7.6px;
}
.vsep {
  flex: none;
  width: 1px;
  height: 28px;
  margin: 0 3px 0 5px;
  background-color: #cfcfcf;
}
.svg-a {
  font-size: 13px;
  fill: #444;
}
.svg-11 {
  font-size: 10px;
  font-weight: bold;
  text-anchor: middle;
  fill: #333;
  font-family: "Liberation Sans", sans-serif;
}
.svg-ab {
  font-size: 10px;
  font-weight: bold;
  text-anchor: middle;
  font-family: "Liberation Mono", monospace;
}
.svg-ab.gray { fill: #8d8d80; }
.svg-ab.dark { fill: #222; }
.svg-ab.red { fill: #e00; }
.svg-q {
  font-size: 15px;
  text-anchor: middle;
  fill: #fff;
  font-family: "Liberation Serif", serif;
}

/* main area */
.main {
  height: 833px;
  display: flex;
}
.sidebar {
  width: 386px;
  flex: none;
  display: flex;
  flex-direction: column;
}
.dock-title {
  height: 29px;
  display: flex;
  align-items: center;
  padding: 0 0 2px 5px;
  gap: 3px;
  font-size: 14px;
}
.dock-btn {
  width: 14px;
  height: 14px;
}
.dock-title .dock-btn:first-of-type {
  margin-left: auto;
}
.dock-title .dock-btn:last-of-type {
  margin-right: 2px;
}
.dock-tools {
  height: 35px;
  display: flex;
  align-items: center;
  padding: 0 0 6px 4px;
}
.dt {
  flex: none;
  width: 31.4px;
  height: 28px;
  display: flex;
  align-items: center;
  justify-content: center;
}
.dt svg {
  width: 20px;
  height: 20px;
}
.dt svg.big {
  width: 26px;
  height: 22px;
}
.dt.wide-dt {
  width: 47px;
  justify-content: flex-start;
  padding-left: 7px;
}
.dt.wide-dt .caret {
  margin-left: 5px;
}
.dt.off svg {
  opacity: .6;
}
.tree-box {
  height: 268px;
  display: flex;
  background-color: #fff;
  border: 1px solid #b9b9b9;
  border-left-color: #ccc;
}
.tree {
  flex: 1;
}
.row {
  height: 22.5px;
  display: flex;
  align-items: center;
  padding-left: 6px;
  white-space: nowrap;
  font-size: 14px;
}
.row.sub {
  padding-left: 26px;
}
.row.last-row {
  height: 18px;
  align-items: flex-start;
  line-height: 20px;
}
.last-row .arrow {
  margin-top: 6px;
}
.last-row .ico {
  height: 18px;
  margin-top: 1px;
}
.arrow {
  flex: none;
  width: 0;
  height: 0;
  margin-right: 12px;
  border-top: 5px solid transparent;
  border-bottom: 5px solid transparent;
  border-left: 6px solid #555;
  border-right: 0 solid transparent;
}
.arrow.none {
  border-left-color: transparent;
}
.arrow.open {
  margin-right: 10px;
  margin-left: -1px;
  border-left: 5px solid transparent;
  border-right: 5px solid transparent;
  border-top: 6px solid #555;
  border-bottom: 0;
}
.ico {
  flex: none;
  width: 20px;
  height: 20px;
  margin-right: 7px;
}
.scrollbar {
  flex: none;
  width: 17px;
  display: flex;
  flex-direction: column;
  background-color: #fff;
  border-left: 1px solid #e8e8e8;
}
.sb-btn {
  flex: none;
  height: 17px;
  display: flex;
  align-items: center;
  justify-content: center;
  border-bottom: 1px solid #e2e2e2;
}
.sb-gap {
  flex: none;
  height: 47px;
}
.sb-thumb {
  flex: 1;
  background-color: #e4e4e4;
}
.sb-up {
  border-left: 5px solid transparent;
  border-right: 5px solid transparent;
  border-bottom: 5px solid #444;
}
.sb-down {
  border-left: 5px solid transparent;
  border-right: 5px solid transparent;
  border-top: 5px solid #444;
}
.split-h {
  height: 8px;
  display: flex;
  justify-content: center;
  align-items: center;
}
.split-h::after {
  content: "";
  width: 20px;
  height: 4px;
  background-image: radial-gradient(circle, #b0b0b0 .8px, transparent 1px);
  background-size: 4px 4px;
}
.layer-box {
  height: 429px;
  background-color: #fff;
  border: 1px solid #b9b9b9;
  border-left-color: #ccc;
}
.layer-row {
  height: 22.5px;
  display: flex;
  align-items: center;
  padding-left: 10px;
  font-size: 14px;
}
.layer-row .arrow {
  margin-right: 13px;
}
.check {
  flex: none;
  width: 17px;
  height: 17px;
  display: flex;
  align-items: center;
  justify-content: center;
  background-color: #fff;
  border: 1px solid #cfcfcf;
  font-size: 17px;
  font-weight: bold;
  line-height: 1;
  color: #000;
  font-family: "DejaVu Sans", sans-serif;
}
.swatch {
  flex: none;
  width: 20px;
  height: 20px;
  margin: 0 7px 0 8px;
  border: 1px solid #4f4f4f;
}
.swatch.prt { background-color: #b8484f; }
.swatch.esp { background-color: #f3a3b4; }
.swatch.ita { background-color: #e8718e; }
.swatch.grc { background-color: #d2af36; }
.raster {
  flex: none;
  width: 16px;
  height: 16px;
  margin: 0 9px 0 10px;
}
.lname {
  font-style: italic;
  font-weight: 600;
  font-size: 15.3px;
  color: #7a7a7a;
}
.lname.under {
  text-decoration: underline;
}
.on .lname {
  font-style: normal;
  font-weight: 700;
  font-size: 14.4px;
  color: #000;
}
.help {
  width: 21px;
  height: 21px;
  margin-left: auto;
  margin-right: 5px;
}
.split-v {
  flex: none;
  width: 9px;
}
.split-v::after {
  content: "";
  display: block;
  width: 4px;
  height: 20px;
  margin: 408px 0 0 3px;
  background-image: radial-gradient(circle, #b0b0b0 .8px, transparent 1px);
  background-size: 4px 4px;
}

/* map side */
.work {
  flex: 1;
  display: flex;
  flex-direction: column;
  min-width: 0;
  padding-top: 1px;
}
.msgbar {
  height: 35px;
  flex: none;
  display: flex;
  align-items: center;
  padding-left: 13px;
  background-color: #e4f2fc;
  border: 1px solid #c3dcee;
  border-right: 0;
}
.msg-icon {
  width: 27px;
  height: 24px;
}
.msg-text {
  margin-left: 14px;
  color: #1d5c9e;
  font-size: 12px;
}
.msg-btn {
  margin-left: auto;
  width: 103px;
  height: 26px;
  padding: 0;
  background-color: #f3f3f3;
  border: 1px solid #aeaeae;
  border-radius: 2px;
  color: #111;
  font-family: inherit;
  font-size: 12.5px;
}
.msg-close {
  width: 22px;
  height: 22px;
  margin: 0 28px 0 39px;
}
.canvas {
  flex: none;
  height: 765px;
  background-color: #000;
}
.map {
  display: block;
  width: 100%;
  height: 100%;
}
.mask {
  fill: #fff;
}
.land {
  fill: #e8718e;
  stroke: #3a3338;
  stroke-width: 1.3;
  stroke-linejoin: round;
}
.lake {
  fill: #fff;
  stroke: #3a3338;
  stroke-width: 1.2;
}
.lagoon {
  fill: #fff;
  stroke: #2e2a2c;
  stroke-width: 1.8;
  stroke-linejoin: round;
}
.islets {
  fill: #333;
}
.under-canvas {
  flex: 1;
  background-color: #fff;
  border-bottom: 1px solid #bdbdbd;
}

/* status bar */
.statusbar {
  height: 35px;
  flex: none;
  display: flex;
  align-items: center;
  padding-left: 5px;
  background-color: #f0f0f0;
  font-size: 13.5px;
}
.locator {
  flex: none;
  width: 250px;
  height: 27px;
  display: flex;
  align-items: center;
  padding-left: 10px;
  gap: 9px;
  background-color: #fff;
  border: 1px solid #c0c0c0;
  border-radius: 2px;
  color: #6f7c88;
  font-size: 13px;
}
.locator svg {
  width: 17px;
  height: 17px;
}
.st-label {
  flex: none;
  white-space: nowrap;
}
.st-coord {
  width: 69.7px;
  margin-left: 697px;
}
.field {
  flex: none;
  height: 27px;
  display: flex;
  align-items: center;
  background-color: #fff;
  border: 1px solid #c0c0c0;
  border-radius: 3px;
}
.coord-val {
  width: 105px;
  justify-content: center;
}
.st-mouse {
  flex: none;
  width: 20px;
  height: 24px;
  margin: 0 3px 0 7px;
}
.st-scale {
  width: 36px;
  margin-left: 12px;
}
.combo {
  width: 94px;
  padding-left: 1px;
}
.combo-arrow {
  margin-left: auto;
  width: 24px;
  height: 100%;
  display: flex;
  align-items: center;
  justify-content: center;
  background-color: #f3f3f3;
  border-left: 1px solid #d0d0d0;
}
.combo-arrow .caret {
  margin: 0;
  border-top-color: #555;
}
.st-lock {
  flex: none;
  width: 16px;
  height: 22px;
  margin: 0 12px 0 16px;
}
.st-magn {
  width: 60px;
}
.spin {
  padding-left: 5px;
  position: relative;
}
.magn-val {
  width: 100px;
}
.rot-val {
  width: 100px;
}
.spin-arrows {
  position: absolute;
  top: 0;
  right: 0;
  bottom: 0;
  width: 18px;
  border-left: 1px solid #d0d0d0;
  background-image:
    linear-gradient(45deg, transparent 50%, #666 50%),
    linear-gradient(-45deg, transparent 50%, #666 50%),
    linear-gradient(135deg, transparent 50%, #666 50%),
    linear-gradient(-135deg, transparent 50%, #666 50%);
  background-size: 5px 5px;
  background-repeat: no-repeat;
  background-position: 3px 6px, 8px 6px, 3px 15px, 8px 15px;
}
.st-rot {
  width: 63px;
  margin-left: 13px;
}
.st-check {
  margin-left: 7px;
  width: 17px;
  height: 20px;
}
.st-render {
  width: 60px;
  margin-left: 8px;
}
.st-globe {
  flex: none;
  width: 19px;
  height: 19px;
  margin-left: 2px;
}
.st-crs {
  margin-left: 3px;
}
.st-msg {
  width: 20px;
  height: 20px;
  margin-left: auto;
  margin-right: 10px;
}

/* windows taskbar */
.taskbar {
  flex: none;
  height: 60px;
  display: flex;
  align-items: center;
  position: relative;
  background: linear-gradient(90deg, #17293a, #1e2d2f 30%, #202f28 40%, #1c2c30 60%, #19282f);
  color: #fff;
}
.tb-weather {
  flex: none;
  width: 28px;
  height: 28px;
  margin-left: 27px;
}
.start {
  flex: none;
  width: 30px;
  height: 30px;
  margin-left: 474px;
  display: grid;
  grid-template-columns: 1fr 1fr;
  gap: 1px;
}
.start i {
  background: linear-gradient(135deg, #7ddcfb, #1e9cf0);
}
.search {
  flex: none;
  width: 273px;
  height: 38px;
  margin-left: 18px;
  display: flex;
  align-items: center;
  padding-left: 13px;
  gap: 13px;
  background-color: #f2f4f5;
  border-radius: 19px;
  color: #444;
  font-size: 18px;
  font-family: "Noto Sans", sans-serif;
}
.search svg {
  width: 20px;
  height: 20px;
}
.tb-view {
  flex: none;
  width: 32px;
  height: 32px;
  margin-left: 15px;
}
.apps {
  flex: none;
  display: flex;
  margin-left: 11.5px;
}
.app {
  flex: none;
  width: 55px;
  height: 50px;
  display: flex;
  align-items: center;
  justify-content: center;
  position: relative;
}
.app svg {
  width: 31px;
  height: 31px;
}
.app.run::after,
.app.active::after {
  content: "";
  position: absolute;
  bottom: 1px;
  left: 50%;
  width: 6px;
  height: 5px;
  margin-left: -3px;
  background-color: #9a9fa3;
  border-radius: 3px;
}
.app.active {
  width: 50px;
  margin-left: 3px;
  background-color: #29373d;
  border: 1px solid #33424a;
  border-radius: 4px;
}
.app.active::after {
  width: 20px;
  height: 4px;
  margin-left: -10px;
  background-color: #60cdff;
}
.svg-app {
  font-size: 14px;
  font-weight: bold;
  text-anchor: middle;
  fill: #fff;
  font-family: "Liberation Sans", sans-serif;
}
.tray {
  flex: none;
  display: flex;
  align-items: center;
  position: absolute;
  right: 0;
  top: 0;
  bottom: 0;
  font-family: "Noto Sans", sans-serif;
  font-size: 14.5px;
}
.tr-up { width: 14px; height: 10px; }
.tr-cloud { width: 22px; height: 22px; margin-left: 23px; }
.tr-lang { margin-left: 22px; width: 34px; }
.tr-wifi { width: 21px; height: 21px; margin-left: 15px; }
.tr-vol { width: 20px; height: 20px; margin-left: 10px; }
.tr-batt { width: 21px; height: 15px; margin-left: 10px; }
.clock {
  width: 80px;
  margin-left: 10px;
  display: flex;
  flex-direction: column;
  align-items: flex-end;
  gap: 2px;
  line-height: 18px;
}
.tr-bell {
  width: 18px;
  height: 22px;
  margin: 0 25px 0 10px;
}
```
